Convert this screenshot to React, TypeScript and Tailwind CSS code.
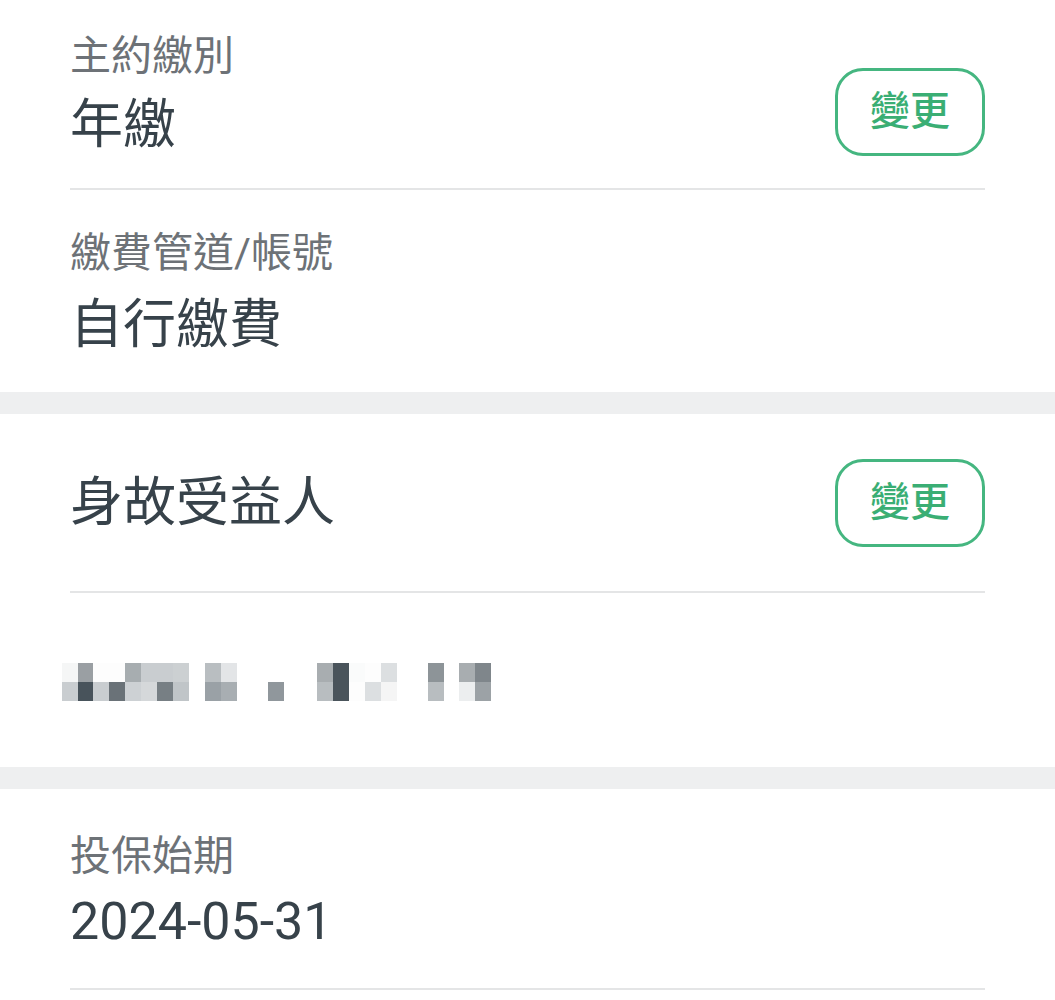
import React from "react";

const FONT = { fontFamily: 'Roboto, "Noto Sans CJK TC", "Noto Sans CJK SC", sans-serif' };

function ChangeButton() {
  return (
    <button className="w-[150px] h-[88px] shrink-0 rounded-[28px] border-[3px] border-[#45b680] bg-white text-[#3aae74] text-[40px] leading-[48px] font-medium flex items-center justify-center">
      變更
    </button>
  );
}

type Block = { x: number; top: string; bottom: string };

const blocks: Block[] = [
  { x: 62, top: "#f5f6f6", bottom: "#c9cdd0" },
  { x: 78, top: "#9a9fa3", bottom: "#48535b" },
  { x: 93, top: "#fdfdfd", bottom: "#c9cdd0" },
  { x: 109, top: "#fdfdfd", bottom: "#6a7278" },
  { x: 125, top: "#a7adb0", bottom: "#cdd1d4" },
  { x: 141, top: "#c9cdd0", bottom: "#d5d8da" },
  { x: 157, top: "#c9cdd0", bottom: "#777f84" },
  { x: 173, top: "#ccd0d2", bottom: "#c0c5c8" },
  { x: 205, top: "#b9bec1", bottom: "#9aa1a6" },
  { x: 221, top: "#e3e5e7", bottom: "#a8aeb2" },
  { x: 268, top: "#ffffff", bottom: "#90979c" },
  { x: 317, top: "#a8adb0", bottom: "#b8bdc0" },
  { x: 333, top: "#4a545b", bottom: "#4a545b" },
  { x: 349, top: "#fafbfb", bottom: "#fdfdfd" },
  { x: 365, top: "#fdfdfd", bottom: "#dcdfe1" },
  { x: 381, top: "#dcdfe1", bottom: "#f5f5f5" },
  { x: 428, top: "#8d9498", bottom: "#b8bdc0" },
  { x: 459, top: "#a8adb0", bottom: "#eceeef" },
  { x: 475, top: "#7f868b", bottom: "#9ca2a6" },
];

function Mosaic() {
  return (
    <div className="relative h-[38px] w-[500px] -ml-[8px]">
      {blocks.map((b, i) => (
        <div
          key={i}
          className="absolute top-0 w-[16px] h-[38px] flex flex-col"
          style={{ left: b.x - 62 }}
        >
          <div className="h-[19px]" style={{ background: b.top }} />
          <div className="h-[19px]" style={{ background: b.bottom }} />
        </div>
      ))}
    </div>
  );
}

export default function App() {
  return (
    <div className="w-[1055px] h-[1000px] bg-white overflow-hidden" style={FONT}>
      {/* Section 1 */}
      <div className="bg-white px-[70px]">
        <div className="flex justify-between items-start pt-[32px] pb-[31px] border-b-2 border-[#e4e5e6]">
          <div className="flex flex-col">
            <div className="text-[41px] leading-[48px] text-[#6d7277]">主約繳別</div>
            <div className="mt-[13px] text-[53px] leading-[64px] text-[#37424a]">年繳</div>
          </div>
          <div className="mt-[36px]">
            <ChangeButton />
          </div>
        </div>
        <div className="flex flex-col pt-[39px] pb-[35px]">
          <div className="text-[41px] leading-[48px] text-[#6d7277]">繳費管道/帳號</div>
          <div className="mt-[16px] text-[53px] leading-[64px] text-[#37424a]">自行繳費</div>
        </div>
      </div>

      <div className="h-[22px] bg-[#eeeff0]" />

      {/* Section 2 */}
      <div className="bg-white px-[70px]">
        <div className="h-[179px] flex items-center justify-between border-b-2 border-[#e4e5e6]">
          <div className="text-[53px] leading-[64px] text-[#37424a]">身故受益人</div>
          <ChangeButton />
        </div>
        <div className="h-[174px] pt-[70px]">
          <Mosaic />
        </div>
      </div>

      <div className="h-[22px] bg-[#eeeff0]" />

      {/* Section 3 */}
      <div className="bg-white px-[70px]">
        <div className="flex flex-col pt-[43px] pb-[34px] border-b-2 border-[#e4e5e6]">
          <div className="text-[41px] leading-[48px] text-[#6d7277]">投保始期</div>
          <div className="mt-[10px] text-[52px] leading-[64px] text-[#37424a]">2024-05-31</div>
        </div>
      </div>
    </div>
  );
}
